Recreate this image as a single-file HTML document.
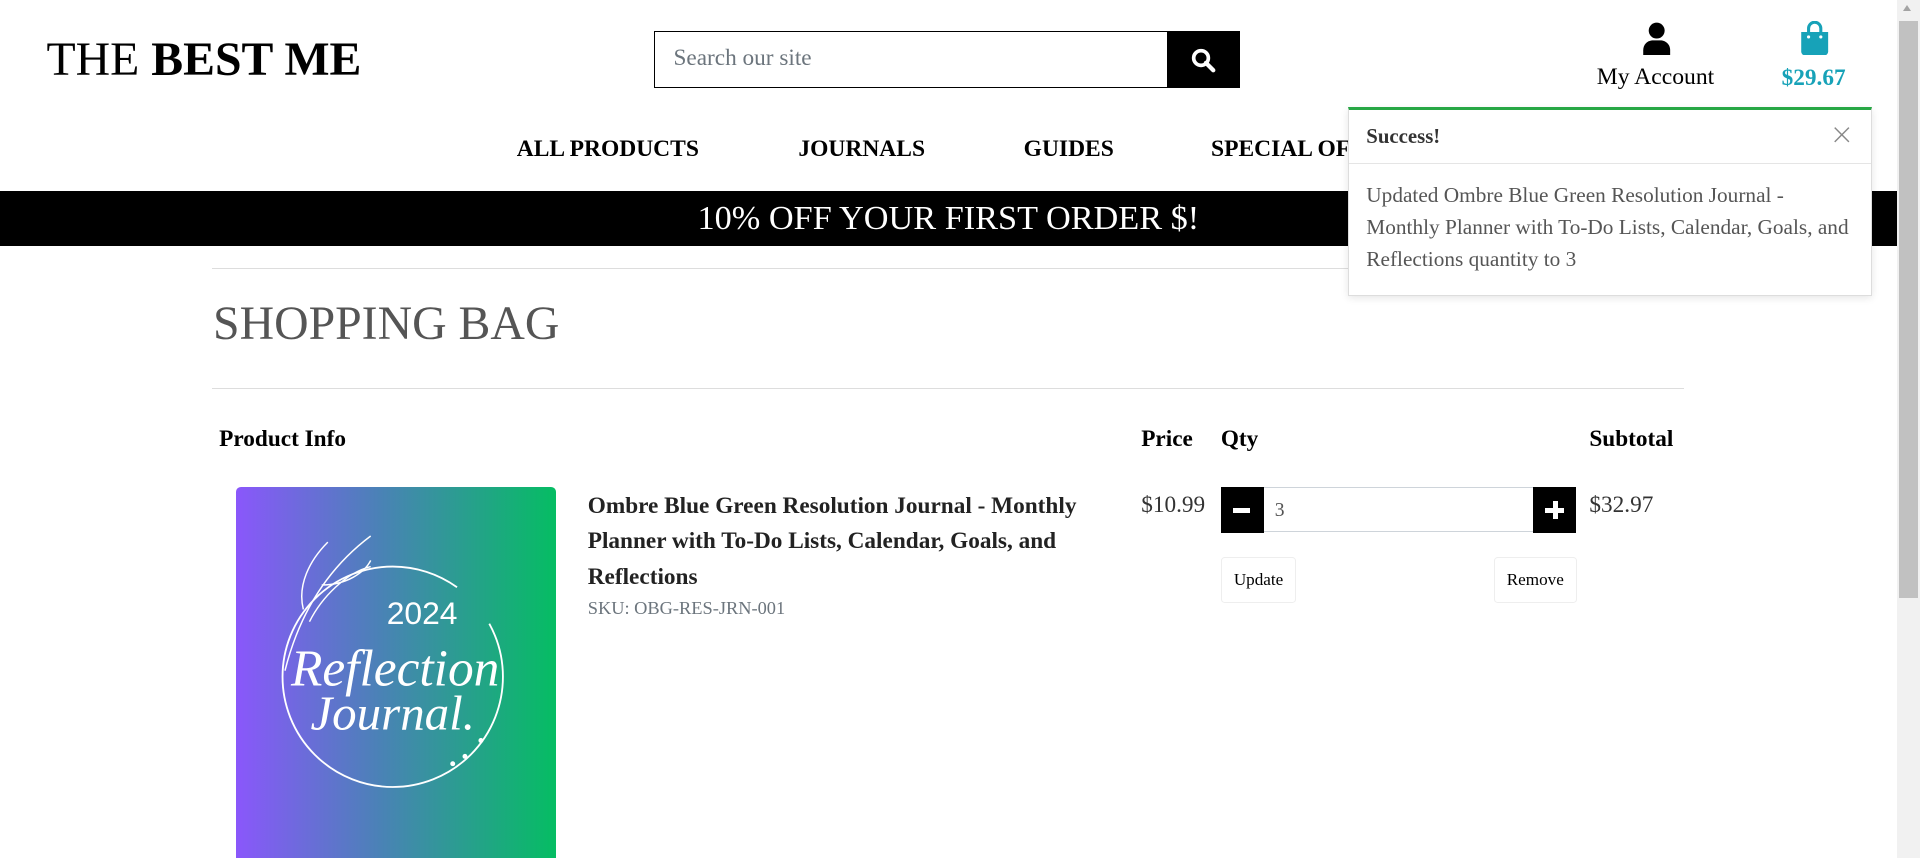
<!DOCTYPE html>
<html><head><meta charset="utf-8"><style>
html{zoom:1.22449;overflow:hidden;height:701px}
body{margin:0;width:1568px;height:701px;overflow:hidden;position:relative;font-family:"Liberation Serif",serif;background:#fff;color:#000}
.a{position:absolute;white-space:nowrap}
</style></head><body>
<div class="a" style="left:38px;top:27px;font-size:39px;line-height:44px">THE <b>BEST ME</b></div>
<div class="a" style="left:534px;top:25px;width:418px;height:45px;border:1px solid #000;border-right:none"></div>
<div class="a" style="left:550px;top:37px;font-size:19px;color:#6c757d">Search our site</div>
<div class="a" style="left:953px;top:25px;width:60px;height:47px;background:#000"></div>
<svg class="a" style="left:972px;top:38px" width="22" height="22" viewBox="0 0 22 22"><circle cx="9" cy="9" r="6" fill="none" stroke="#fff" stroke-width="3"/><path d="M13 13l6 6" stroke="#fff" stroke-width="3.5" stroke-linecap="round"/></svg>
<svg class="a" style="left:1341px;top:18px" width="24" height="27" viewBox="0 0 24 27"><circle cx="12" cy="7" r="6.5" fill="#000"/><path d="M1 27v-4c0-5 4-8 8-8h6c4 0 8 3 8 8v4z" fill="#000"/></svg>
<div class="a" style="left:1304px;top:52px;font-size:19.3px">My Account</div>
<svg class="a" style="left:1470px;top:17px" width="24" height="28" viewBox="0 0 24 28"><path d="M7 10V6a5 5 0 0 1 10 0v4" fill="none" stroke="#17a2b8" stroke-width="2.5"/><path d="M1 9h22v16a3 3 0 0 1-3 3H4a3 3 0 0 1-3-3z" fill="#17a2b8"/><circle cx="7" cy="13" r="1.3" fill="#fff"/><circle cx="17" cy="13" r="1.3" fill="#fff"/></svg>
<div class="a" style="left:1455px;top:53px;font-size:19px;font-weight:bold;color:#17a2b8">$29.67</div>
<div class="a" style="left:422px;top:111px;font-size:19.2px;font-weight:bold">ALL PRODUCTS</div>
<div class="a" style="left:652px;top:111px;font-size:19.2px;font-weight:bold">JOURNALS</div>
<div class="a" style="left:836px;top:111px;font-size:19.2px;font-weight:bold">GUIDES</div>
<div class="a" style="left:989px;top:111px;font-size:19.2px;font-weight:bold">SPECIAL OFFERS</div>
<div class="a" style="left:0;top:156px;width:1549px;height:45px;background:#000;color:#fff;font-size:28px;line-height:45px;text-align:center">10% OFF YOUR FIRST ORDER $!</div>
<div class="a" style="left:173px;top:219px;width:1202px;height:1px;background:#ddd"></div>
<div class="a" style="left:174px;top:242px;font-size:39px;color:#555">SHOPPING BAG</div>
<div class="a" style="left:173px;top:317px;width:1202px;height:1px;background:#ddd"></div>
<div class="a" style="left:1101px;top:87px;width:428px;height:155px;background:#fff;border:1px solid #ddd;border-top:3px solid #28a745;box-shadow:0 2px 6px rgba(0,0,0,.1);box-sizing:border-box;white-space:normal;z-index:5">
<div style="height:44px;border-bottom:1px solid #e5e5e5;position:relative"><span style="position:absolute;left:14px;top:12px;font-size:17px;font-weight:bold;color:#333">Success!</span><span style="position:absolute;right:14px;top:6px;font-size:24px;color:#888;font-family:'DejaVu Sans',sans-serif;font-weight:200">×</span></div>
<div style="padding:13px 0 0 14px;width:398px;font-size:17.4px;line-height:26px;color:#555">Updated Ombre Blue Green Resolution Journal - Monthly Planner with To-Do Lists, Calendar, Goals, and Reflections quantity to 3</div></div>
<div class="a" style="left:179px;top:348px;font-size:19px;font-weight:bold">Product Info</div>
<div class="a" style="left:932px;top:348px;font-size:19px;font-weight:bold">Price</div>
<div class="a" style="left:997px;top:348px;font-size:19px;font-weight:bold">Qty</div>
<div class="a" style="left:1298px;top:348px;font-size:19px;font-weight:bold">Subtotal</div>
<div class="a" style="left:193px;top:398px;width:261px;height:303px;border-radius:4px 4px 0 0;background:linear-gradient(90deg,#8a57fb,#4a82b6 45%,#05bd63)"></div>
<svg class="a" style="left:193px;top:398px" width="261" height="303" viewBox="0 0 261 303"><circle cx="128" cy="155" r="90" fill="none" stroke="#fff" stroke-width="1.5" stroke-dasharray="480 40"/><path d="M40 150C50 110 70 70 110 40M60 110c10-20 30-40 50-45M55 100c-5-20 5-40 20-55M70 80c20 0 35-10 40-20" fill="none" stroke="#fff" stroke-width="1.2"/><circle cx="200" cy="207" r="2" fill="#fff"/><circle cx="187" cy="220" r="2" fill="#fff"/><circle cx="177" cy="226" r="2" fill="#fff"/><text x="152" y="112" font-size="26" fill="#fff" text-anchor="middle" font-family="Liberation Sans,sans-serif">2024</text><text x="130" y="162" font-size="42" fill="#fff" text-anchor="middle" font-style="italic" font-family="Liberation Serif,serif">Reflection</text><text x="128" y="198" font-size="40" fill="#fff" text-anchor="middle" font-style="italic" font-family="Liberation Serif,serif">Journal.</text></svg>
<div class="a" style="left:480px;top:399px;width:420px;white-space:normal;font-size:19px;font-weight:bold;line-height:29px;color:#222">Ombre Blue Green Resolution Journal - Monthly Planner with To-Do Lists, Calendar, Goals, and Reflections</div>
<div class="a" style="left:480px;top:488px;font-size:15px;color:#6c757d">SKU: OBG-RES-JRN-001</div>
<div class="a" style="left:932px;top:402px;font-size:19px;color:#333">$10.99</div>
<div class="a" style="left:997px;top:398px;width:35px;height:37px;background:#000"></div>
<div class="a" style="left:1007px;top:415px;width:14px;height:4px;background:#fff"></div>
<div class="a" style="left:1032px;top:398px;width:220px;height:35px;border:1px solid #ced4da;border-left:none;border-right:none"></div>
<div class="a" style="left:1041px;top:408px;font-size:16px;color:#555">3</div>
<div class="a" style="left:1252px;top:398px;width:35px;height:37px;background:#000"></div>
<div class="a" style="left:1262px;top:415px;width:15px;height:4px;background:#fff"></div>
<div class="a" style="left:1268px;top:409px;width:4px;height:15px;background:#fff"></div>
<div class="a" style="left:997px;top:455px;width:60px;height:36px;border:1px solid #eee;border-radius:3px;font-size:14px;line-height:36px;text-align:center">Update</div>
<div class="a" style="left:1220px;top:455px;width:66px;height:36px;border:1px solid #eee;border-radius:3px;font-size:14px;line-height:36px;text-align:center">Remove</div>
<div class="a" style="left:1298px;top:402px;font-size:19px;color:#333">$32.97</div>
<div class="a" style="left:1549px;top:0;width:19px;height:701px;background:#f1f1f1"></div>
<div class="a" style="left:1551px;top:17px;width:15px;height:471px;background:#c1c1c1"></div>
<div class="a" style="left:1554px;top:4px;width:0;height:0;border:4px solid transparent;border-bottom:5px solid #a3a3a3;border-top:none"></div>
</body></html>
